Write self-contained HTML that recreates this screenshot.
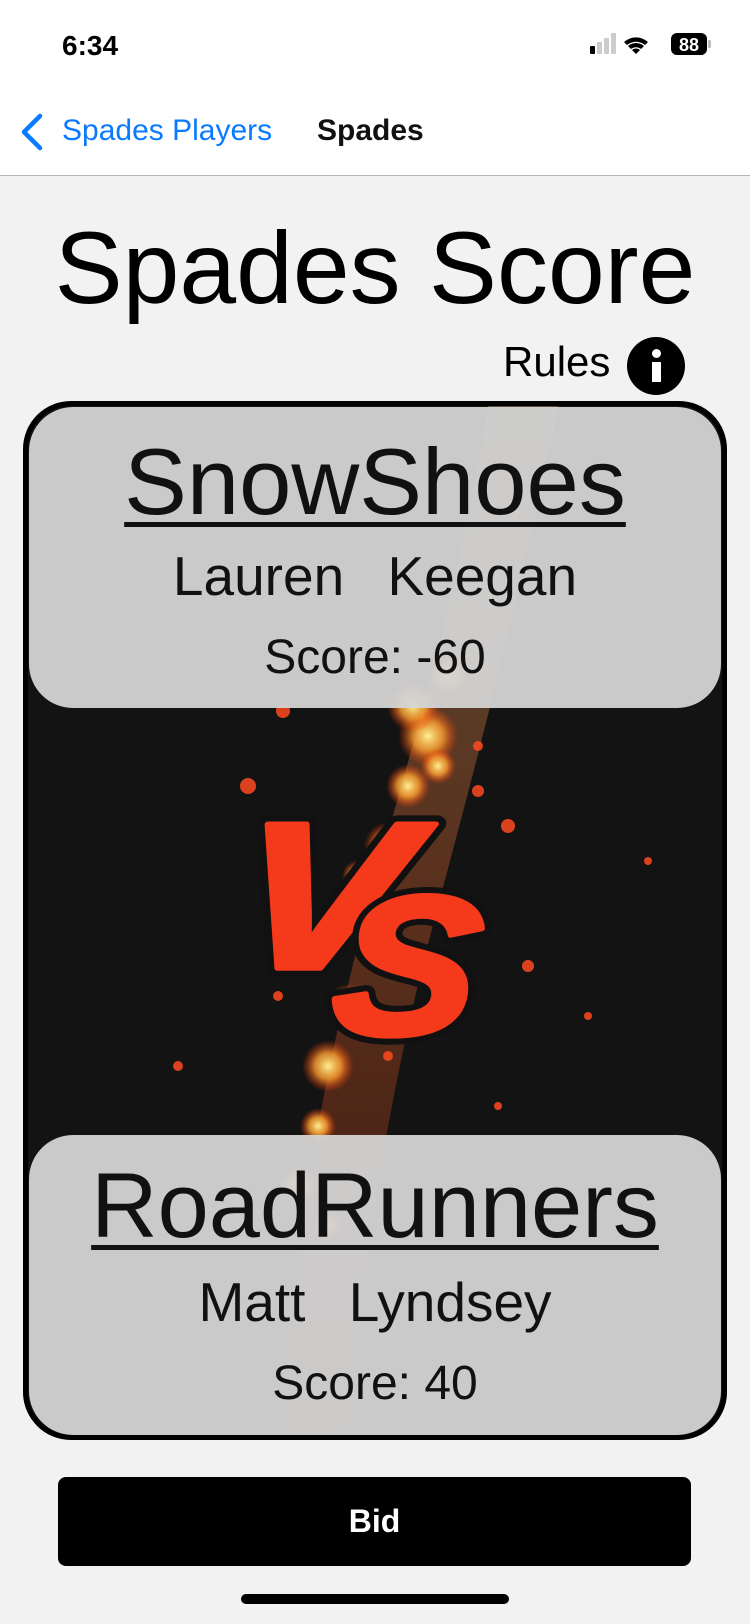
<!DOCTYPE html>
<html><head><meta charset="utf-8"><style>
*{margin:0;padding:0;box-sizing:border-box}
body{width:750px;height:1624px;background:#f2f2f2;font-family:"Liberation Sans",sans-serif;position:relative;overflow:hidden}
.abs{position:absolute}
.t{position:absolute;white-space:nowrap}
</style></head><body>
<div class="abs" style="left:0;top:0;width:750px;height:176px;background:#fff;border-bottom:1px solid #b5b5b5"></div>
<div class="t" style="left:62px;top:30px;font-size:28px;font-weight:bold;color:#000">6:34</div>
<svg class="abs" style="left:588px;top:30px" width="140" height="30" viewBox="0 0 140 30">
<rect x="2" y="16" width="5" height="8" rx="1" fill="#000"/><rect x="9" y="12" width="5" height="12" rx="1" fill="#ccc"/><rect x="16" y="8" width="5" height="16" rx="1" fill="#ccc"/><rect x="23" y="3" width="5" height="21" rx="1" fill="#ccc"/>
<path d="M48 24 l-4-4 a6 6 0 0 1 8 0z M40 16 a12 12 0 0 1 16 0 l-3 3 a8 8 0 0 0-10 0z M36 12 a18 18 0 0 1 24 0 l-3 3 a14 14 0 0 0-18 0z" fill="#000"/>
<rect x="83" y="3" width="36" height="22" rx="6" fill="#000"/><rect x="120" y="10" width="3" height="8" rx="1" fill="#bbb"/>
<text x="101" y="21" font-size="18" font-weight="bold" fill="#fff" text-anchor="middle" font-family="Liberation Sans">88</text></svg>
<svg class="abs" style="left:16px;top:112px" width="28" height="40"><path d="M24 4 L8 20 L24 36" stroke="#0a7aff" stroke-width="4.5" fill="none" stroke-linecap="round" stroke-linejoin="round"/></svg>
<div class="t" style="left:62px;top:114px;font-size:30px;color:#0a7aff">Spades Players</div>
<div class="t" style="left:317px;top:114px;font-size:30px;font-weight:bold;color:#111">Spades</div>
<div class="t" style="left:0;width:750px;text-align:center;top:208px;font-size:102px;color:#000;line-height:120px">Spades Score</div>
<div class="t" style="left:503px;top:338px;font-size:42px;color:#000">Rules</div>
<div class="abs" style="left:627px;top:337px;width:58px;height:58px;border-radius:50%;background:#000"></div>
<div class="abs" style="left:652px;top:349px;width:9px;height:9px;border-radius:50%;background:#fff"></div>
<div class="abs" style="left:652px;top:362px;width:9px;height:20px;background:#fff"></div>
<div class="abs" style="left:23px;top:401px;width:704px;height:1039px;border:5px solid #000;border-radius:48px;overflow:hidden;background:#131313">
<svg width="694" height="1029" style="position:absolute;left:0;top:0">
<defs><radialGradient id="g"><stop offset="0" stop-color="#fff090"/><stop offset=".5" stop-color="#ffa030" stop-opacity=".8"/><stop offset="1" stop-color="#ff3000" stop-opacity="0"/></radialGradient>
<linearGradient id="streak" x1="0" y1="0" x2="0" y2="1"><stop offset="0" stop-color="#ffcf80"/><stop offset=".5" stop-color="#ff7030"/><stop offset="1" stop-color="#a02808"/></linearGradient></defs>
<path d="M460 0 C430 200 380 350 340 500 C300 650 270 800 250 1029 L320 1029 C340 800 370 650 410 500 C450 350 490 200 530 0Z" fill="url(#streak)" opacity=".3"/>
<g fill="url(#g)">
<circle cx="400" cy="330" r="30"/><circle cx="385" cy="300" r="26"/><circle cx="380" cy="380" r="22"/><circle cx="360" cy="440" r="24"/><circle cx="345" cy="520" r="28"/><circle cx="320" cy="600" r="22"/><circle cx="300" cy="660" r="26"/><circle cx="290" cy="720" r="18"/><circle cx="420" cy="270" r="20"/><circle cx="270" cy="780" r="20"/><circle cx="300" cy="820" r="14"/><circle cx="330" cy="470" r="16"/><circle cx="410" cy="360" r="18"/>
</g>
<g fill="#ff4a20" opacity=".85"><circle cx="255" cy="305" r="7"/><circle cx="450" cy="385" r="6"/><circle cx="480" cy="420" r="7"/><circle cx="250" cy="590" r="5"/><circle cx="560" cy="610" r="4"/><circle cx="620" cy="455" r="4"/><circle cx="500" cy="560" r="6"/><circle cx="360" cy="650" r="5"/><circle cx="220" cy="380" r="8"/><circle cx="470" cy="700" r="4"/><circle cx="150" cy="660" r="5"/><circle cx="450" cy="340" r="5"/></g>
</svg>
<svg width="694" height="1029" style="position:absolute;left:0;top:0">
<g font-family="Liberation Sans" font-weight="bold" font-style="italic">
<g transform="translate(200,562) scale(1.35,1.1) skewX(-6)">
<text x="0" y="0" font-size="190" fill="#111" stroke="#111" stroke-width="16" stroke-linejoin="round">V</text>
<text x="0" y="0" font-size="190" fill="#f53a1c" stroke="#f53a1c" stroke-width="5" stroke-linejoin="round">V</text></g>
<g transform="translate(300,628) scale(1.2,1.1) skewX(-6)">
<text x="0" y="0" font-size="180" fill="#111" stroke="#111" stroke-width="16" stroke-linejoin="round">S</text>
<text x="0" y="0" font-size="180" fill="#f53a1c" stroke="#f53a1c" stroke-width="5" stroke-linejoin="round">S</text></g>
</g></svg>
<div class="abs" style="left:1px;top:1px;width:692px;height:301px;border-radius:44px;background:rgba(212,212,212,.95)"></div>
<div class="abs" style="left:1px;top:729px;width:692px;height:300px;border-radius:44px;background:rgba(212,212,212,.95)"></div>
<div class="t" style="left:0;width:694px;text-align:center;top:22px;font-size:94px;text-decoration:underline;text-decoration-thickness:5px;text-underline-offset:8px;color:#111">SnowShoes</div>
<div class="t" style="left:0;width:694px;text-align:center;top:138px;font-size:55px;color:#111;word-spacing:28px">Lauren Keegan</div>
<div class="t" style="left:0;width:694px;text-align:center;top:224px;font-size:48px;color:#111">Score: -60</div>
<div class="t" style="left:0;width:694px;text-align:center;top:748px;font-size:92px;text-decoration:underline;text-decoration-thickness:5px;text-underline-offset:8px;color:#111">RoadRunners</div>
<div class="t" style="left:0;width:694px;text-align:center;top:864px;font-size:55px;color:#111;word-spacing:28px">Matt Lyndsey</div>
<div class="t" style="left:0;width:694px;text-align:center;top:950px;font-size:48px;color:#111">Score: 40</div>
</div>
<div class="abs" style="left:58px;top:1477px;width:633px;height:89px;background:#000;border-radius:8px;color:#fff;font-size:32px;font-weight:bold;text-align:center;line-height:89px">Bid</div>
<div class="abs" style="left:241px;top:1594px;width:268px;height:10px;border-radius:5px;background:#000"></div>
</body></html>
